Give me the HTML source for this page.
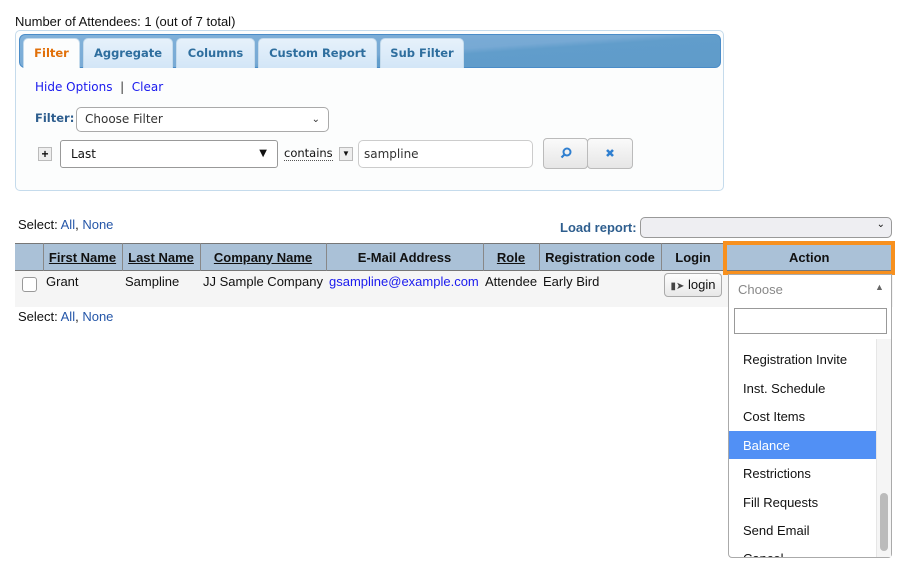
<!DOCTYPE html>
<html><head><meta charset="utf-8"><style>
*{box-sizing:border-box;margin:0;padding:0}
body{width:914px;height:578px;background:#fff;font-family:"Liberation Sans",Arial,sans-serif;font-size:13px;color:#111;position:relative;overflow:hidden}
.a{position:absolute}
.ver{font-family:"DejaVu Sans",Verdana,sans-serif}
.tab{position:absolute;top:38px;height:30px;border:1px solid #c5dbec;border-bottom:none;border-radius:5px 5px 0 0;background:linear-gradient(#e6f1fb,#d3e6f7);color:#2e6e9e;font-weight:bold;font-size:11.5px;text-align:center;line-height:29px;white-space:nowrap}
.sel{position:absolute;border:1px solid #aaa;border-radius:5px;background:#fff;font-size:12px;padding-left:8px}
th{background:#aac1d7;font-weight:bold;font-size:13px;border-right:1px solid #888;height:27px;text-align:center;color:#111}
th u{text-decoration:underline}
table{border-collapse:collapse;position:absolute;left:15px;top:243px;width:878px}
thead tr{border-top:1px solid #777;border-bottom:1px solid #777}
.li{position:absolute;left:743px;font-size:13px}
</style></head><body>
<div class="a" style="left:15px;top:14px">Number of Attendees: 1 (out of 7 total)</div>
<div class="a" style="left:15px;top:30px;width:709px;height:161px;border:1px solid #c5dbec;border-radius:5px;background:#fcfdfd"></div>
<div class="a" style="left:19px;top:34px;width:702px;height:34px;border:1px solid #4a8cc8;border-radius:6px;background:linear-gradient(176deg,#82b2da 0%,#77a9d4 55%,#619dcb 62%,#5f9bca 100%)"></div>
<div class="tab ver" style="left:23px;width:57px;background:#fcfdfd;color:#e17009">Filter</div>
<div class="tab ver" style="left:83px;width:90px">Aggregate</div>
<div class="tab ver" style="left:176px;width:79px">Columns</div>
<div class="tab ver" style="left:258px;width:119px">Custom Report</div>
<div class="tab ver" style="left:380px;width:84px">Sub Filter</div>
<div class="a ver" style="left:35px;top:80px;font-size:12px;color:#1a1aee">Hide Options <span style="color:#333">&nbsp;|&nbsp;</span> Clear</div>
<div class="a ver" style="left:35px;top:111px;font-size:11.5px;font-weight:bold;color:#2e5e8e">Filter:</div>
<div class="sel ver" style="left:76px;top:107px;width:253px;height:25px;line-height:23px;color:#333">Choose Filter<span style="position:absolute;right:8px;top:0;font-size:10px">&#8964;</span></div>
<div class="a" style="left:38px;top:147px;width:14px;height:14px;border:1px solid #bbb;background:#eee;font-size:12px;font-weight:bold;text-align:center;line-height:12px">+</div>
<div class="sel ver" style="left:60px;top:140px;width:218px;height:28px;line-height:26px;border-radius:3px;border-color:#999;padding-left:10px">Last<span style="position:absolute;right:10px;top:0;font-size:10px">&#9660;</span></div>
<div class="a ver" style="left:284px;top:146px;font-size:11.5px;border-bottom:1px dotted #555;line-height:14px">contains</div>
<div class="a" style="left:339px;top:147px;width:14px;height:14px;border:1px solid #bbb;background:#eee;font-size:8px;text-align:center;line-height:12px">&#9660;</div>
<div class="sel ver" style="left:358px;top:140px;width:175px;height:28px;line-height:26px;color:#333;padding-left:5px;border-color:#ccc">sampline</div>
<div class="a" style="left:543px;top:138px;width:45px;height:31px;border:1px solid #bbb;border-radius:4px;background:linear-gradient(#fafafa,#e6e6e6)"><svg width="45" height="31" style="position:absolute;left:-1px;top:-1px"><circle cx="24" cy="14" r="3.5" fill="none" stroke="#2f7fd0" stroke-width="2"/><line x1="21.5" y1="16.5" x2="18.5" y2="19.5" stroke="#2f7fd0" stroke-width="2.2"/></svg></div>
<div class="a" style="left:587px;top:138px;width:46px;height:31px;border:1px solid #bbb;border-radius:4px;background:linear-gradient(#fafafa,#e6e6e6)"><svg width="46" height="31" style="position:absolute;left:-1px;top:-1px"><path d="M20 12l6 6M26 12l-6 6" stroke="#2f7fd0" stroke-width="2.6"/></svg></div>
<div class="a" style="left:18px;top:217px">Select: <span style="color:#2456a8">All</span>, <span style="color:#2456a8">None</span></div>
<div class="a" style="left:560px;top:220px;font-size:13px;font-weight:bold;color:#2e5e8e">Load report:</div>
<div class="a" style="left:640px;top:217px;width:252px;height:21px;border:1px solid #999;border-radius:5px;background:#eeeef2"><span style="position:absolute;right:6px;top:1px;font-size:10px">&#8964;</span></div>
<table><thead><tr>
<th style="width:28px;border-left:none"></th><th style="width:79px"><u>First Name</u></th><th style="width:78px"><u>Last Name</u></th><th style="width:126px"><u>Company Name</u></th><th style="width:157px">E-Mail Address</th><th style="width:56px"><u>Role</u></th><th style="width:122px">Registration code</th><th style="width:64px">Login</th><th style="border-right:none">Action</th>
</tr></thead></table>
<div class="a" style="left:15px;top:271px;width:878px;height:36px;background:#f5f5f5"></div>
<div class="a" style="left:723px;top:241px;width:172px;height:34px;border:4px solid #f7901e"></div>
<div class="a" style="left:22px;top:277px;width:15px;height:15px;border:1px solid #999;border-radius:3px;background:#fff"></div>
<div class="a" style="left:46px;top:274px">Grant</div>
<div class="a" style="left:125px;top:274px">Sampline</div>
<div class="a" style="left:203px;top:274px">JJ Sample Company</div>
<div class="a" style="left:329px;top:274px;color:#1a1aee">gsampline@example.com</div>
<div class="a" style="left:485px;top:274px">Attendee</div>
<div class="a" style="left:543px;top:274px">Early Bird</div>
<div class="a" style="left:664px;top:273px;width:58px;height:24px;border:1px solid #aaa;border-radius:4px;background:linear-gradient(#fdfdfd,#e8e8e8);text-align:center;line-height:22px;font-size:13px"><span style="font-size:10px;color:#444">&#9646;&#10148;</span> login</div>
<div class="a" style="left:18px;top:309px">Select: <span style="color:#2456a8">All</span>, <span style="color:#2456a8">None</span></div>
<div class="a" style="left:728px;top:274px;width:164px;height:284px;border:1px solid #aaa;border-radius:0 0 4px 4px;background:#fff"></div>
<div class="a" style="left:738px;top:282px;color:#888">Choose</div>
<div class="a" style="left:875px;top:282px;font-size:9px;color:#666">&#9650;</div>
<div class="a" style="left:734px;top:308px;width:153px;height:26px;border:1px solid #999"></div>
<div class="a" style="left:729px;top:431px;width:147px;height:28px;background:#5190f5"></div>
<div class="a" style="left:876px;top:339px;width:15px;height:218px;background:#f5f5f5;border-left:1px solid #e6e6e6"></div>
<div class="a" style="left:880px;top:493px;width:8px;height:58px;background:#bbb;border-radius:4px"></div>
<div class="li" style="top:352px">Registration Invite</div>
<div class="li" style="top:381px">Inst. Schedule</div>
<div class="li" style="top:409px">Cost Items</div>
<div class="li" style="top:438px;color:#fff">Balance</div>
<div class="li" style="top:466px">Restrictions</div>
<div class="li" style="top:495px">Fill Requests</div>
<div class="li" style="top:523px">Send Email</div>
<div class="a" style="left:729px;top:549px;width:147px;height:8px;overflow:hidden"><div style="position:absolute;left:14px;top:2px">Cancel</div></div>
</body></html>
